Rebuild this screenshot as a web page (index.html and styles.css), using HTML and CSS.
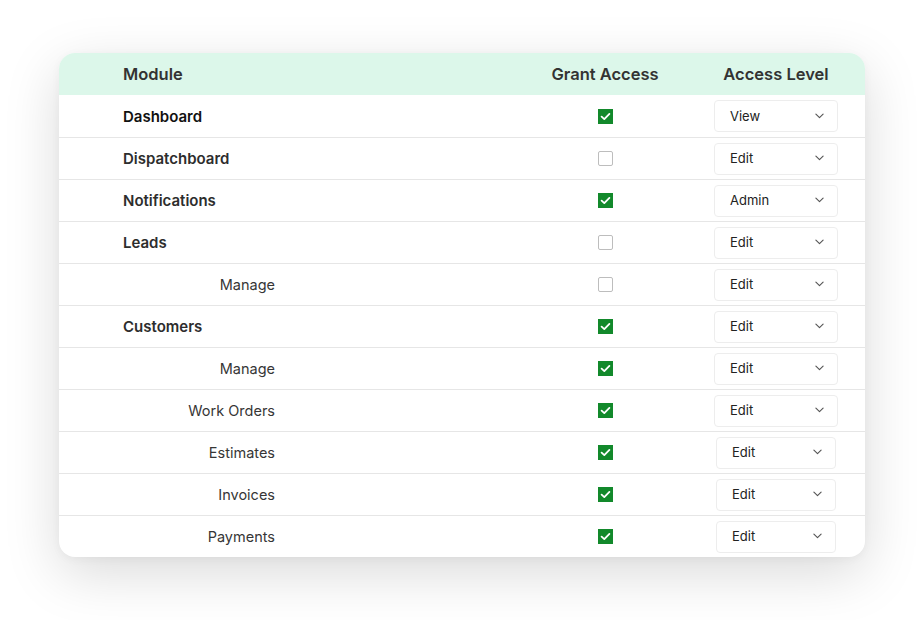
FILE: index.html
```html
<!DOCTYPE html>
<html>
<head>
<meta charset="utf-8">
<link rel="stylesheet" href="styles.css">
</head>
<body>
<div class="card">
  <div class="row head">
    <div class="c-mod">Module</div>
    <div class="c-grant">Grant Access</div>
    <div class="c-level"><div class="lvl-head">Access Level</div></div>
  </div>

  <div class="row">
    <div class="c-mod"><span class="main dark">Dashboard</span></div>
    <div class="c-grant"><span class="cb on"><svg viewBox="0 0 15 15"><path d="M3.6 7.6 L6.3 10.1 L11.4 4.9"/></svg></span></div>
    <div class="c-level"><div class="sel"><span>View</span><svg viewBox="0 0 10 6"><path d="M1 1 L5 4.8 L9 1"/></svg></div></div>
  </div>

  <div class="row">
    <div class="c-mod"><span class="main">Dispatchboard</span></div>
    <div class="c-grant"><span class="cb"></span></div>
    <div class="c-level"><div class="sel"><span>Edit</span><svg viewBox="0 0 10 6"><path d="M1 1 L5 4.8 L9 1"/></svg></div></div>
  </div>

  <div class="row">
    <div class="c-mod"><span class="main">Notifications</span></div>
    <div class="c-grant"><span class="cb on"><svg viewBox="0 0 15 15"><path d="M3.6 7.6 L6.3 10.1 L11.4 4.9"/></svg></span></div>
    <div class="c-level"><div class="sel"><span>Admin</span><svg viewBox="0 0 10 6"><path d="M1 1 L5 4.8 L9 1"/></svg></div></div>
  </div>

  <div class="row">
    <div class="c-mod"><span class="main">Leads</span></div>
    <div class="c-grant"><span class="cb"></span></div>
    <div class="c-level"><div class="sel"><span>Edit</span><svg viewBox="0 0 10 6"><path d="M1 1 L5 4.8 L9 1"/></svg></div></div>
  </div>

  <div class="row">
    <div class="c-mod"><span class="sub">Manage</span></div>
    <div class="c-grant"><span class="cb"></span></div>
    <div class="c-level"><div class="sel"><span>Edit</span><svg viewBox="0 0 10 6"><path d="M1 1 L5 4.8 L9 1"/></svg></div></div>
  </div>

  <div class="row">
    <div class="c-mod"><span class="main">Customers</span></div>
    <div class="c-grant"><span class="cb on"><svg viewBox="0 0 15 15"><path d="M3.6 7.6 L6.3 10.1 L11.4 4.9"/></svg></span></div>
    <div class="c-level"><div class="sel"><span>Edit</span><svg viewBox="0 0 10 6"><path d="M1 1 L5 4.8 L9 1"/></svg></div></div>
  </div>

  <div class="row">
    <div class="c-mod"><span class="sub">Manage</span></div>
    <div class="c-grant"><span class="cb on"><svg viewBox="0 0 15 15"><path d="M3.6 7.6 L6.3 10.1 L11.4 4.9"/></svg></span></div>
    <div class="c-level"><div class="sel"><span>Edit</span><svg viewBox="0 0 10 6"><path d="M1 1 L5 4.8 L9 1"/></svg></div></div>
  </div>

  <div class="row">
    <div class="c-mod"><span class="sub">Work Orders</span></div>
    <div class="c-grant"><span class="cb on"><svg viewBox="0 0 15 15"><path d="M3.6 7.6 L6.3 10.1 L11.4 4.9"/></svg></span></div>
    <div class="c-level"><div class="sel"><span>Edit</span><svg viewBox="0 0 10 6"><path d="M1 1 L5 4.8 L9 1"/></svg></div></div>
  </div>

  <div class="row">
    <div class="c-mod"><span class="sub">Estimates</span></div>
    <div class="c-grant"><span class="cb on"><svg viewBox="0 0 15 15"><path d="M3.6 7.6 L6.3 10.1 L11.4 4.9"/></svg></span></div>
    <div class="c-level"><div class="sel narrow"><span>Edit</span><svg viewBox="0 0 10 6"><path d="M1 1 L5 4.8 L9 1"/></svg></div></div>
  </div>

  <div class="row">
    <div class="c-mod"><span class="sub">Invoices</span></div>
    <div class="c-grant"><span class="cb on"><svg viewBox="0 0 15 15"><path d="M3.6 7.6 L6.3 10.1 L11.4 4.9"/></svg></span></div>
    <div class="c-level"><div class="sel narrow"><span>Edit</span><svg viewBox="0 0 10 6"><path d="M1 1 L5 4.8 L9 1"/></svg></div></div>
  </div>

  <div class="row">
    <div class="c-mod"><span class="sub">Payments</span></div>
    <div class="c-grant"><span class="cb on"><svg viewBox="0 0 15 15"><path d="M3.6 7.6 L6.3 10.1 L11.4 4.9"/></svg></span></div>
    <div class="c-level"><div class="sel narrow"><span>Edit</span><svg viewBox="0 0 10 6"><path d="M1 1 L5 4.8 L9 1"/></svg></div></div>
  </div>
</div>
</body>
</html>
```

FILE: styles.css
```css
* { box-sizing: border-box; }
html, body { margin: 0; padding: 0; background: #fff; }
body {
  font-family: "Inter", "Open Sans", sans-serif;
  color: #333;
  width: 923px;
  height: 620px;
  overflow: hidden;
  padding-top: 53px;
  padding-left: 59px;
}
.card {
  width: 806px;
  background: #fff;
  border-radius: 16px;
  box-shadow: 0 16px 55px rgba(0, 0, 0, 0.15), 0 2px 10px rgba(0, 0, 0, 0.04);
  overflow: hidden;
}
.row {
  display: grid;
  grid-template-columns: 482px 128px 196px;
  height: 42px;
  align-items: center;
  border-top: 1px solid #e6e6e6;
}
.row.head {
  background: #dcf7ea;
  border-top: none;
  font-size: 16.5px;
  font-weight: 600;
  color: #333;
}
.row.head + .row { border-top: none; }
.c-mod { padding-left: 64px; line-height: 20px; }
.c-grant { display: flex; justify-content: center; }
.c-level { padding-left: 45px; }
.lvl-head { width: 124px; text-align: center; }

.main {
  font-size: 15px;
  font-weight: 600;
  color: #2d2d2d;
}
.main.dark { color: #111; }
.sub {
  display: block;
  width: 152px;
  text-align: right;
  font-size: 14.5px;
  font-weight: 400;
  color: #363636;
}

.cb {
  width: 15px;
  height: 15px;
  border: 1.5px solid #bdbdbd;
  border-radius: 2px;
  display: flex;
}
.cb.on {
  background: #12892b;
  border-radius: 0;
  border: none;
}
.cb svg { width: 15px; height: 15px; }
.cb svg path { fill: none; stroke: #fff; stroke-width: 1.8; stroke-linecap: round; stroke-linejoin: round; }

.sel {
  width: 124px;
  height: 32px;
  border: 1.5px solid #ededed;
  border-radius: 4px;
  display: flex;
  align-items: center;
  justify-content: space-between;
  padding: 0 13px 1px 15px;
  font-size: 13px;
  line-height: 16px;
  color: #222;
}
.sel.narrow { width: 120px; margin-left: 2px; }
.sel svg { width: 9px; height: 6px; }
.sel svg path { fill: none; stroke: #555; stroke-width: 1.3; stroke-linecap: round; stroke-linejoin: round; }
```
